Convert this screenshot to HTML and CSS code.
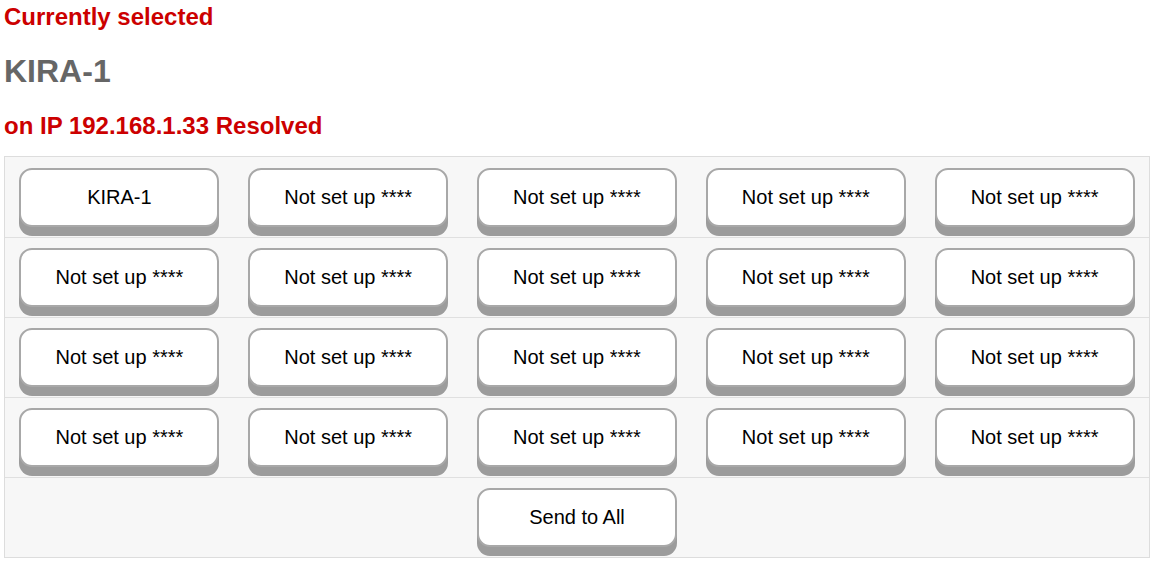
FILE: index.html
```html
<!DOCTYPE html>
<html>
<head>
<meta charset="utf-8">
<link rel="stylesheet" href="styles.css">
</head>
<body>
<div class="page">
  <div class="label">Currently selected</div>
  <div class="device">KIRA-1</div>
  <div class="label ip">on IP 192.168.1.33 Resolved</div>
  <div class="panel">
    <div class="row">
      <button class="btn">KIRA-1</button>
      <button class="btn">Not set up ****</button>
      <button class="btn">Not set up ****</button>
      <button class="btn">Not set up ****</button>
      <button class="btn">Not set up ****</button>
    </div>
    <div class="row">
      <button class="btn">Not set up ****</button>
      <button class="btn">Not set up ****</button>
      <button class="btn">Not set up ****</button>
      <button class="btn">Not set up ****</button>
      <button class="btn">Not set up ****</button>
    </div>
    <div class="row">
      <button class="btn">Not set up ****</button>
      <button class="btn">Not set up ****</button>
      <button class="btn">Not set up ****</button>
      <button class="btn">Not set up ****</button>
      <button class="btn">Not set up ****</button>
    </div>
    <div class="row">
      <button class="btn">Not set up ****</button>
      <button class="btn">Not set up ****</button>
      <button class="btn">Not set up ****</button>
      <button class="btn">Not set up ****</button>
      <button class="btn">Not set up ****</button>
    </div>
    <div class="row single">
      <button class="btn">Send to All</button>
    </div>
  </div>
</div>
</body>
</html>
```

FILE: styles.css
```css
html, body {
  margin: 0;
  padding: 0;
  background: #ffffff;
}

.page {
  padding: 3px 4px 0 4px;
  font-family: "Liberation Sans", Arial, sans-serif;
}

.label {
  font-size: 24px;
  font-weight: bold;
  line-height: 28px;
  color: #cc0000;
}

.device {
  margin-top: 22px;
  font-size: 32px;
  font-weight: bold;
  line-height: 36px;
  color: #666666;
}

.ip {
  margin-top: 23px;
}

.panel {
  margin-top: 16px;
  width: 1146px;
  box-sizing: border-box;
  border: 1px solid #dddddd;
  background: #f7f7f7;
}

.row {
  display: grid;
  grid-template-columns: repeat(5, 1fr);
  justify-items: center;
  align-items: start;
  box-sizing: border-box;
  height: 80px;
  padding-top: 10px;
  border-top: 1px solid #e0e0e0;
}

.row:first-child {
  border-top: none;
  padding-top: 11px;
}

.row.single {
  display: flex;
  justify-content: center;
}

.btn {
  width: 200px;
  height: 59px;
  box-sizing: border-box;
  border: 2px solid #a8a8a8;
  border-radius: 13px;
  background: #ffffff;
  box-shadow: 0 9px 0 #9c9c9c;
  font-family: "Liberation Sans", Arial, sans-serif;
  font-size: 20px;
  color: #000000;
  padding: 0;
  margin: 0;
  cursor: pointer;
}
```
